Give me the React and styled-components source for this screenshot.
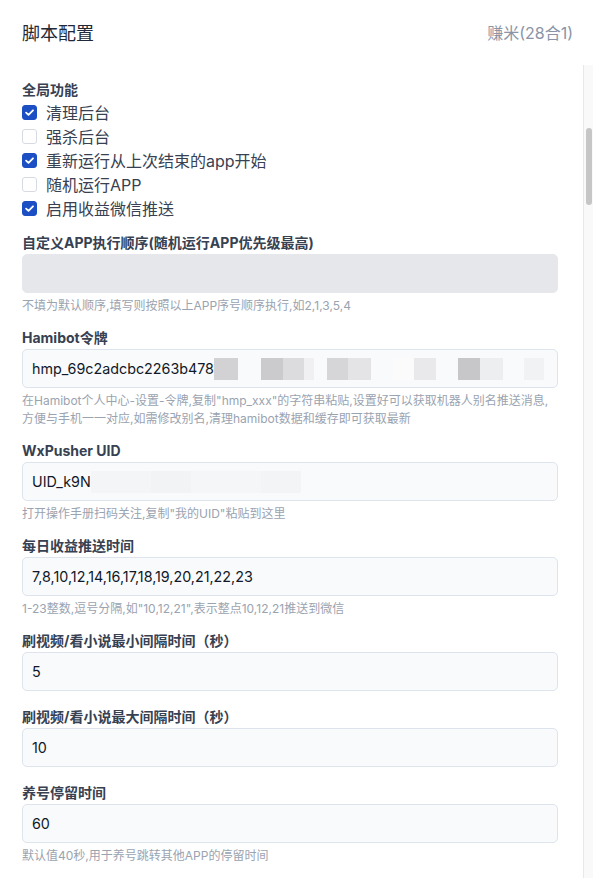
import React from "react";
import styled, { createGlobalStyle } from "styled-components";

const Global = createGlobalStyle`
  html, body { margin: 0; padding: 0; background: #fff; }
  body {
    font-family: "Inter", "Noto Sans CJK SC", sans-serif;
    -webkit-font-smoothing: antialiased;
  }
  * { box-sizing: border-box; }
`;

const Page = styled.div`
  width: 593px;
  height: 878px;
  display: flex;
  flex-direction: column;
  overflow: hidden;
  background: #fff;
`;

const Header = styled.header`
  height: 65px;
  flex: none;
  display: flex;
  align-items: center;
  justify-content: space-between;
  padding: 0 20px 2px 22px;
`;

const Title = styled.h1`
  margin: 0;
  font-size: 18px;
  font-weight: 400;
  color: #1f2937;
`;

const SubTitle = styled.span`
  font-size: 16px;
  color: #8a94a6;
`;

const Body = styled.div`
  flex: 1;
  display: flex;
  min-height: 0;
`;

const Content = styled.main`
  flex: 1;
  padding: 16px 25px 0 22px;
  overflow: hidden;
`;

const ScrollTrack = styled.div`
  width: 10px;
  flex: none;
  background: #f9f9f9;
  border-left: 1px solid #e8e8e8;
  display: flex;
  justify-content: center;
`;

const Thumb = styled.div`
  margin-top: 63px;
  width: 6px;
  height: 77px;
  border-radius: 4px;
  background: #c6c6c6;
`;

const SectionTitle = styled.div`
  font-size: 14px;
  font-weight: 700;
  line-height: 18px;
  color: #374151;
  margin-bottom: 1px;
`;

const CheckList = styled.div`
  display: flex;
  flex-direction: column;
  margin-bottom: 14px;
`;

const CheckRow = styled.label`
  height: 24px;
  display: flex;
  align-items: center;
  gap: 9px;
  font-size: 16px;
  color: #374151;
`;

const Box = styled.span`
  width: 15px;
  height: 15px;
  border-radius: 3px;
  display: flex;
  align-items: center;
  justify-content: center;
  background: ${(p) => (p.$checked ? "#1d4fc4" : "#fff")};
  border: 1px solid ${(p) => (p.$checked ? "#1d4fc4" : "#d6dbe3")};
`;

const Field = styled.div`
  margin-bottom: ${(p) => (p.$hasHelp ? "14px" : "17px")};
`;

const Label = styled.div`
  font-size: 14px;
  font-weight: 700;
  line-height: 18px;
  color: #374151;
  margin-bottom: 2px;
`;

const InputBox = styled.div`
  height: 39px;
  border-radius: 5px;
  border: 1.5px solid ${(p) => (p.$disabled ? "#e5e7eb" : "#dde4ee")};
  background: ${(p) => (p.$disabled ? "#e5e7eb" : "#f8fafc")};
  display: flex;
  align-items: center;
  padding: 0 9px;
  font-size: 14.3px;
  color: #111827;
  white-space: nowrap;
  overflow: hidden;
`;

const Mosaic = styled.span`
  display: inline-flex;
  height: 22px;
  align-items: stretch;
`;

const Tile = styled.span`
  display: inline-block;
  height: 100%;
`;

const Help = styled.div`
  margin-top: 4px;
  font-size: 12px;
  line-height: 18px;
  color: #9aa3b0;
`;

const Check = () => (
  <svg width="11" height="11" viewBox="0 0 12 12">
    <path d="M2.3 6.2 L4.9 8.6 L9.8 3.6" fill="none" stroke="#fff" strokeWidth="2" strokeLinecap="round" strokeLinejoin="round" />
  </svg>
);

const hamiTiles = [
  [24, "#d2d2d4"], [23, "transparent"], [22, "#cbcbcd"], [21, "#dcdcdf"], [10, "#f0f0f2"],
  [13, "transparent"], [21, "#d6d6d8"], [23, "#e4e4e6"], [22, "transparent"], [21, "#fbfbfb"],
  [22, "#e9e9eb"], [22, "transparent"], [22, "#c7c7c9"], [23, "#eceeef"], [21, "transparent"],
  [20, "#f1f2f3"],
];

const uidTiles = [
  [60, "#f4f5f7"], [40, "#f1f3f5"], [70, "#f5f6f8"], [40, "#f2f4f6"],
];

const Tiles = ({ data }) => (
  <Mosaic>
    {data.map(([w, c], i) => (
      <Tile key={i} style={{ width: w, background: c }} />
    ))}
  </Mosaic>
);

const checks = [
  ["清理后台", true],
  ["强杀后台", false],
  ["重新运行从上次结束的app开始", true],
  ["随机运行APP", false],
  ["启用收益微信推送", true],
];

export default function App() {
  return (
    <Page>
      <Global />
      <Header>
        <Title>脚本配置</Title>
        <SubTitle>赚米(28合1)</SubTitle>
      </Header>
      <Body>
        <Content>
          <SectionTitle>全局功能</SectionTitle>
          <CheckList>
            {checks.map(([t, c]) => (
              <CheckRow key={t}>
                <Box $checked={c}>{c && <Check />}</Box>
                {t}
              </CheckRow>
            ))}
          </CheckList>

          <Field $hasHelp>
            <Label>自定义APP执行顺序(随机运行APP优先级最高)</Label>
            <InputBox $disabled />
            <Help>不填为默认顺序,填写则按照以上APP序号顺序执行,如2,1,3,5,4</Help>
          </Field>

          <Field $hasHelp>
            <Label>Hamibot令牌</Label>
            <InputBox>
              hmp_69c2adcbc2263b478
              <Tiles data={hamiTiles} />
            </InputBox>
            <Help>
              在Hamibot个人中心-设置-令牌,复制"hmp_xxx"的字符串粘贴,设置好可以获取机器人别名推送消息,
              <br />
              方便与手机一一对应,如需修改别名,清理hamibot数据和缓存即可获取最新
            </Help>
          </Field>

          <Field $hasHelp>
            <Label>WxPusher UID</Label>
            <InputBox>
              UID_k9N
              <Tiles data={uidTiles} />
            </InputBox>
            <Help>打开操作手册扫码关注,复制"我的UID"粘贴到这里</Help>
          </Field>

          <Field $hasHelp>
            <Label>每日收益推送时间</Label>
            <InputBox>7,8,10,12,14,16,17,18,19,20,21,22,23</InputBox>
            <Help>1-23整数,逗号分隔,如"10,12,21",表示整点10,12,21推送到微信</Help>
          </Field>

          <Field>
            <Label>刷视频/看小说最小间隔时间（秒）</Label>
            <InputBox>5</InputBox>
          </Field>

          <Field>
            <Label>刷视频/看小说最大间隔时间（秒）</Label>
            <InputBox>10</InputBox>
          </Field>

          <Field $hasHelp>
            <Label>养号停留时间</Label>
            <InputBox>60</InputBox>
            <Help>默认值40秒,用于养号跳转其他APP的停留时间</Help>
          </Field>
        </Content>
        <ScrollTrack>
          <Thumb />
        </ScrollTrack>
      </Body>
    </Page>
  );
}
